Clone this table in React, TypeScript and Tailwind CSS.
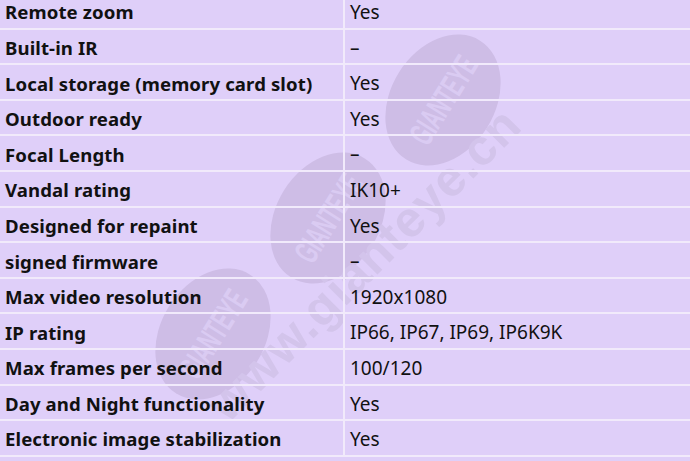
const specs: [string, string][] = [
  ['Remote zoom', 'Yes'],
  ['Built-in IR', '–'],
  ['Local storage (memory card slot)', 'Yes'],
  ['Outdoor ready', 'Yes'],
  ['Focal Length', '–'],
  ['Vandal rating', 'IK10+'],
  ['Designed for repaint', 'Yes'],
  ['signed firmware', '–'],
  ['Max video resolution', '1920x1080'],
  ['IP rating', 'IP66, IP67, IP69, IP6K9K'],
  ['Max frames per second', '100/120'],
  ['Day and Night functionality', 'Yes'],
  ['Electronic image stabilization', 'Yes'],
];

const ovals = [
  { cx: 443, cy: 100 },
  { cx: 328, cy: 218 },
  { cx: 213, cy: 334 },
];

// background watermark, sits under the table text
function Watermark() {
  return (
    <svg
      className="pointer-events-none absolute left-0 top-0"
      width="690"
      height="461"
      viewBox="0 0 690 461"
    >
      {ovals.map((o, i) => (
        <g key={i} transform={`translate(${o.cx} ${o.cy}) rotate(-58)`}>
          <ellipse rx="70" ry="52" fill="#cebde6" />
          <text
            x="0"
            y="12"
            textAnchor="middle"
            fontFamily="'Liberation Sans', Arial, sans-serif"
            fontWeight="700"
            fontSize="34"
            fill="#dacbf2"
            transform="scale(0.56 1)"
          >
            GIANTEYE
          </text>
        </g>
      ))}
      <text
        x="0"
        y="0"
        transform="translate(228 424) rotate(-45)"
        fontFamily="'Liberation Sans', Arial, sans-serif"
        fontWeight="700"
        fontSize="50"
        fill="#d3c4eb"
        letterSpacing="1"
      >
        www.gianteye.cn
      </text>
    </svg>
  );
}

export default function App() {
  return (
    <div className="relative h-[461px] w-[690px] overflow-hidden bg-[#dfcff9] font-['Noto_Sans','Open_Sans',sans-serif] text-[19px] text-[#111]">
      <Watermark />
      <div className="relative -mt-[6px] flex flex-col">
        {specs.map(([label, value]) => (
          <div key={label} className="flex h-[35.6px] border-b-2 border-[#f1eafb]">
            <div className="flex w-[345px] items-center border-r-2 border-[#f1eafb] pl-[5px] pt-[3px] text-[18.6px] font-bold tracking-[0.1px]">
              {label}
            </div>
            <div className="flex flex-1 items-center pl-[5px] pt-[3px]">{value}</div>
          </div>
        ))}
      </div>
    </div>
  );
}
